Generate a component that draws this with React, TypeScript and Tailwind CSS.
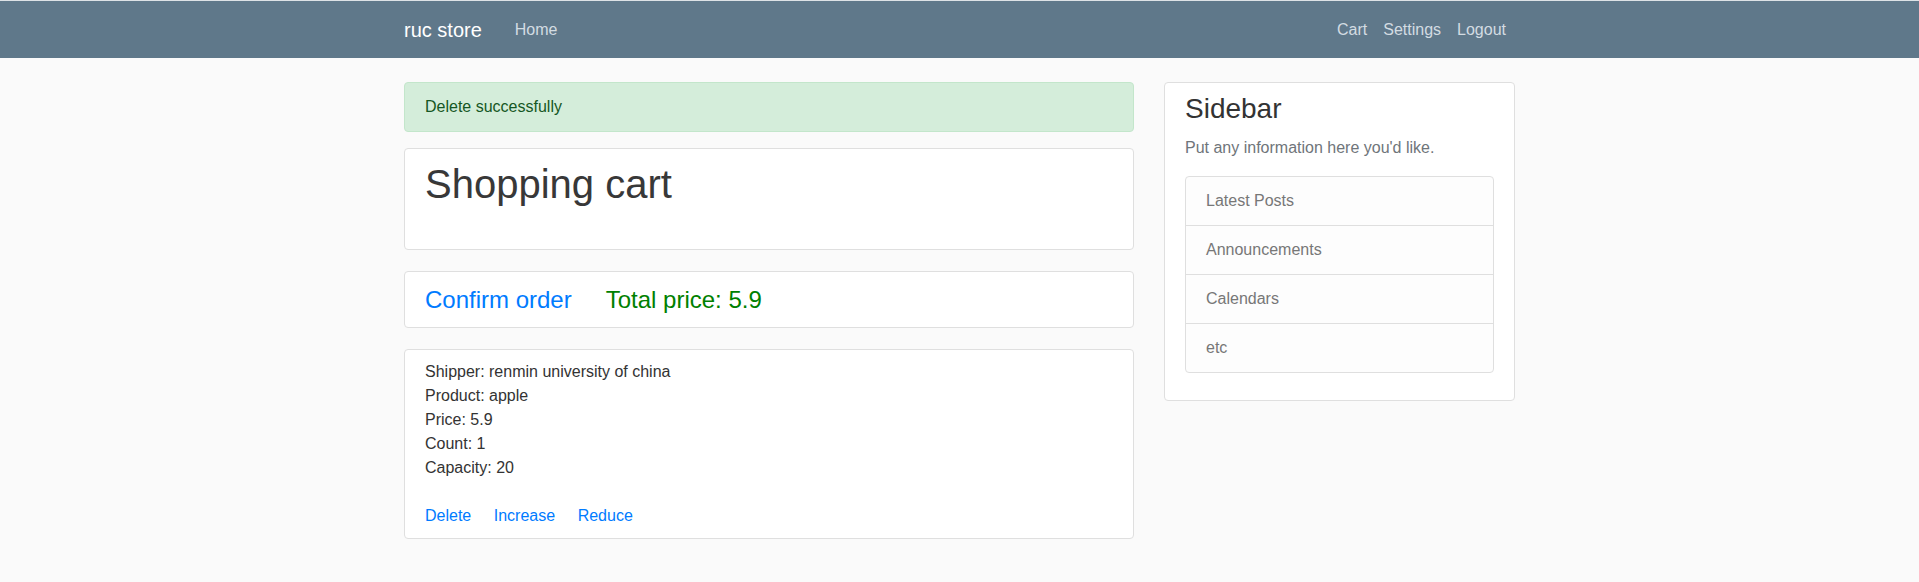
const sideLinks = ["Latest Posts", "Announcements", "Calendars", "etc"]

function Navbar() {
  return (
    <div className="border-t border-[#dde2e6] bg-[#5f788a]">
      <div className="mx-auto flex h-[57px] w-[1111px] items-center pt-px">
        <a className="text-[20px] leading-[30px] text-white">ruc store</a>
        <a className="ml-[33px] text-[16px] leading-6 text-[#d3dce2]">Home</a>
        <div className="ml-auto flex gap-4 pr-[9px] text-[16px] leading-6 text-[#d3dce2]">
          <a>Cart</a>
          <a>Settings</a>
          <a>Logout</a>
        </div>
      </div>
    </div>
  )
}

function CartItem() {
  return (
    <div className="rounded border border-[#dfdfdf] bg-white px-5 py-[10px] text-[16px] leading-6 text-[#333]">
      <div>Shipper: renmin university of china</div>
      <div>Product: apple</div>
      <div>Price: 5.9</div>
      <div>Count: 1</div>
      <div>Capacity: 20</div>
      <div className="mt-6 flex gap-[22.5px] text-[#007bff]">
        <a>Delete</a>
        <a>Increase</a>
        <a>Reduce</a>
      </div>
    </div>
  )
}

function Sidebar() {
  return (
    <div className="rounded border border-[#dfdfdf] bg-white px-5 pt-[9px] pb-[27px]">
      <h3 className="mb-[10px] text-[28px] leading-[1.2] text-[#333]">Sidebar</h3>
      <p className="mb-4 text-[16px] leading-6 text-[#6f757a]">Put any information here you'd like.</p>
      <div className="divide-y divide-[#dfdfdf] rounded border border-[#dfdfdf] bg-[#fdfdfd]">
        {sideLinks.map((l) => (
          <div key={l} className="px-5 py-3 text-[16px] leading-6 text-[#777]">
            {l}
          </div>
        ))}
      </div>
    </div>
  )
}

export default function App() {
  return (
    <div className="min-h-screen bg-[#fafafa] font-['Liberation_Sans',Arial,sans-serif]">
      <Navbar />
      <div className="mx-auto mt-6 flex w-[1111px] items-start gap-[30px]">
        <div className="w-[730px]">
          <div className="mb-4 rounded border border-[#c3e6cb] bg-[#d4edda] px-5 py-3 text-[16px] leading-6 text-[#155724]">
            Delete successfully
          </div>
          <div className="mb-[21px] rounded border border-[#dfdfdf] bg-white px-5 pt-[11px] pb-[41px]">
            <h1 className="text-[40px] leading-[48px] text-[#383838]">Shopping cart</h1>
          </div>
          <div className="mb-[21px] flex items-center rounded border border-[#dfdfdf] bg-white px-5 py-[13px] text-[24px] leading-[29px]">
            <a className="text-[#007bff]">Confirm order</a>
            <span className="ml-[34px] text-[#008000]">Total price: 5.9</span>
          </div>
          <CartItem />
        </div>
        <div className="w-[351px]">
          <Sidebar />
        </div>
      </div>
    </div>
  )
}
